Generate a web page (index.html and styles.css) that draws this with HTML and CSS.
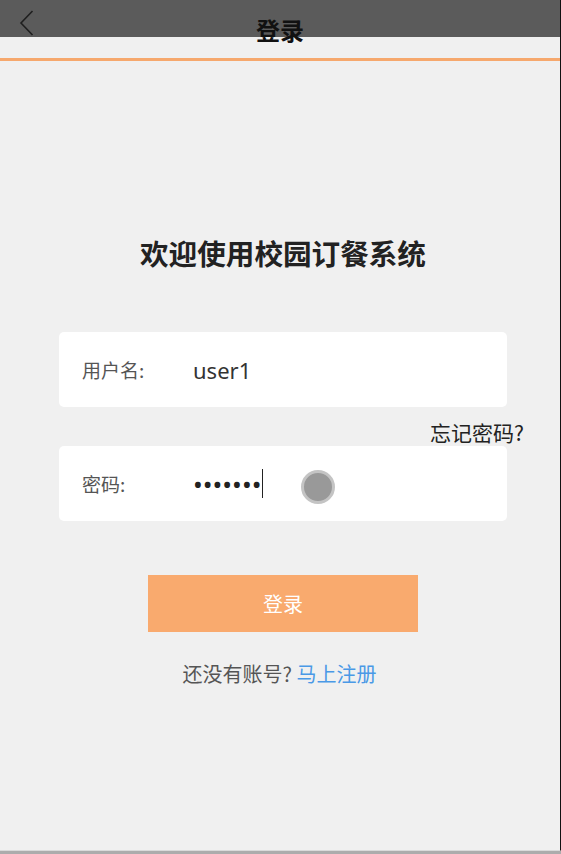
FILE: index.html
```html
<!DOCTYPE html>
<html lang="zh-CN">
<head>
<meta charset="utf-8">
<title>登录</title>
<link rel="stylesheet" href="styles.css">
</head>
<body>
<div class="frame">
  <header class="topbar">
    <div class="topbar-band">
      <span class="back">
        <svg width="16" height="28" viewBox="0 0 16 28"><path d="M13.5 1 L2 13 L13.5 25" fill="none" stroke="#1f1f1f" stroke-width="1.6"/></svg>
      </span>
    </div>
    <h1 class="topbar-title">登录</h1>
  </header>
  <main class="content">
    <h2 class="welcome">欢迎使用校园订餐系统</h2>
    <div class="form">
      <div class="field">
        <span class="field-label">用户名:</span>
        <span class="field-value">user1</span>
      </div>
      <div class="forgot-row"><span class="forgot">忘记密码?</span></div>
      <div class="field field-password">
        <span class="field-label">密码:</span>
        <span class="field-value dots">•••••••</span><span class="caret"></span>
        <span class="touch"></span>
      </div>
      <button class="submit">登录</button>
      <p class="register">还没有账号? <a class="register-link">马上注册</a></p>
    </div>
  </main>
</div>
<div class="bottom-edge"></div>
</body>
</html>
```

FILE: styles.css
```css
html, body {
  margin: 0;
  padding: 0;
}
body {
  background: #f0f0f0;
  font-family: "Noto Sans", "Noto Sans CJK SC", sans-serif;
  width: 561px;
  height: 854px;
  overflow: hidden;
}
.frame {
  width: 560px;
  height: 850px;
  border-right: 1px solid #111;
  border-bottom: 1px solid #dadada;
  box-sizing: content-box;
  position: relative;
}
.bottom-edge {
  height: 3px;
  background: #acacac;
}
.topbar {
  position: relative;
  height: 58px;
  border-bottom: 3px solid #f6a86d;
}
.topbar-band {
  height: 37px;
  background: #5b5b5b;
  display: flex;
  align-items: flex-start;
}
.back {
  display: block;
  margin: 10px 0 0 19px;
  line-height: 0;
}
.topbar-title {
  position: absolute;
  left: 0;
  right: 0;
  top: 15px;
  margin: 0;
  text-align: center;
  font-family: "Noto Sans CJK SC", sans-serif;
  font-size: 24px;
  line-height: 30px;
  font-weight: 700;
  color: #111;
}
.content {
  display: flex;
  flex-direction: column;
  align-items: center;
}
.welcome {
  margin: 172px 0 0 6px;
  font-family: "Noto Sans CJK SC", sans-serif;
  font-size: 28.6px;
  line-height: 40px;
  font-weight: 700;
  color: #222;
}
.form {
  width: 448px;
  margin: 59px 0 0 6px;
  display: flex;
  flex-direction: column;
  align-items: center;
}
.field {
  position: relative;
  width: 100%;
  height: 75px;
  background: #fff;
  border-radius: 5px;
  display: flex;
  align-items: center;
  box-sizing: border-box;
  padding-left: 23px;
}
.field-label {
  width: 111px;
  font-family: "Noto Sans CJK SC", sans-serif;
  font-size: 19px;
  color: #555;
}
.field-value {
  font-size: 22px;
  color: #333;
}
.dots {
  font-size: 26px;
  line-height: 30px;
  letter-spacing: 0;
  color: #222;
}
.caret {
  display: inline-block;
  width: 1px;
  height: 29px;
  background: #222;
  margin-left: 1px;
}
.touch {
  position: absolute;
  left: 242px;
  top: 24px;
  width: 28px;
  height: 28px;
  border-radius: 50%;
  background: #999;
  border: 3px solid #c4c4c4;
}
.forgot-row {
  width: 100%;
  height: 39px;
  display: flex;
  justify-content: flex-end;
  align-items: flex-end;
}
.forgot {
  font-family: "Noto Sans CJK SC", sans-serif;
  font-size: 21px;
  line-height: 28px;
  color: #222;
  margin-right: -17px;
}
.submit {
  margin-top: 54px;
  width: 270px;
  height: 57px;
  border: 0;
  background: #f9aa6e;
  color: #fff;
  font-family: "Noto Sans CJK SC", sans-serif;
  font-size: 20px;
  padding: 0;
}
.register {
  margin: 29px 7px 0 0;
  font-family: "Noto Sans CJK SC", sans-serif;
  font-size: 20px;
  line-height: 26px;
  color: #555;
}
.register-link {
  color: #4a99e6;
}
```
